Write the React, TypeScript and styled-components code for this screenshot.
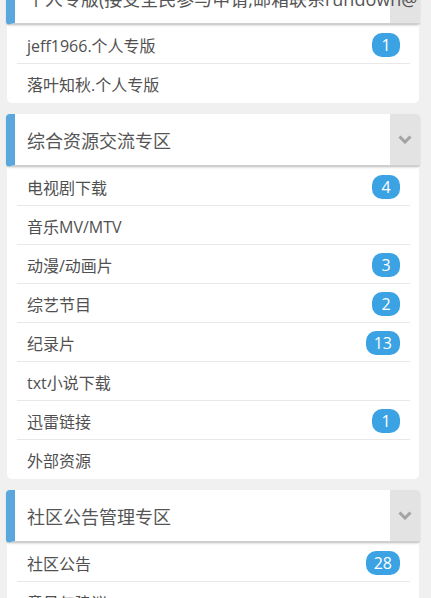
import React from 'react';
import styled, { createGlobalStyle } from 'styled-components';

const GlobalStyle = createGlobalStyle`
    html, body {
        margin: 0;
        padding: 0;
        background: #f0f0f0;
        font-family: "Open Sans", "Noto Sans CJK SC", sans-serif;
    }
`;

const Page = styled.div`
    display: flex;
    flex-direction: column;
    width: 431px;
    height: 598px;
    overflow: hidden;
    box-sizing: border-box;
    padding: 0 11px 0 6px;
`;

const Forums = styled.div`
    display: flex;
    flex-direction: column;
    gap: 11px;
    margin-top: ${(props: { offset: number }) => -props.offset}px;
`;

const Section = styled.section`
    display: flex;
    flex-direction: column;
`;

const Header = styled.div`
    position: relative;
    display: flex;
    align-items: center;
    height: 51px;
    background: #fff;
    border-left: 9px solid #5aa7dd;
    border-bottom: 2px solid #cfcfcf;
    border-radius: 4px;
    box-shadow: 0 1px 2px rgba(0, 0, 0, 0.12);
    overflow: hidden;
`;

const HeaderTitle = styled.div`
    position: relative;
    z-index: 1;
    padding-left: 12px;
    font-size: 18px;
    color: #555;
    white-space: nowrap;
`;

const Toggle = styled.div`
    position: absolute;
    top: 0;
    right: 0;
    bottom: 0;
    width: 30px;
    display: flex;
    align-items: center;
    justify-content: center;
    background: #e3e3e3;
`;

const List = styled.ul`
    list-style: none;
    margin: 0 1px;
    padding: 0 9px 0 10px;
    background: #fff;
    border-radius: 0 0 5px 5px;
`;

const Row = styled.li`
    display: flex;
    align-items: center;
    justify-content: space-between;
    height: 39px;
    box-sizing: border-box;
    padding: 1px 10px 0;
    border-bottom: 1px solid #e8e8e8;
    font-size: 16px;
    color: #505050;

    &:last-child {
        border: none;
    }
`;

const Badge = styled.span`
    min-width: 28px;
    height: 24px;
    box-sizing: border-box;
    padding: 0 8px;
    border-radius: 10px;
    background: #3ba2e4;
    color: #fff;
    font-size: 16px;
    line-height: 24px;
    text-align: center;
`;

interface Forum {
    title: string;
    items: { name: string; count?: number }[];
}

const forums: Forum[] = [
    {
        title: '个人专版(接受全民参与申请,邮箱联系rundown@',
        items: [
            { name: 'jeff1966.个人专版', count: 1 },
            { name: '落叶知秋.个人专版' },
        ],
    },
    {
        title: '综合资源交流专区',
        items: [
            { name: '电视剧下载', count: 4 },
            { name: '音乐MV/MTV' },
            { name: '动漫/动画片', count: 3 },
            { name: '综艺节目', count: 2 },
            { name: '纪录片', count: 13 },
            { name: 'txt小说下载' },
            { name: '迅雷链接', count: 1 },
            { name: '外部资源' },
        ],
    },
    {
        title: '社区公告管理专区',
        items: [
            { name: '社区公告', count: 28 },
            { name: '意见与建议' },
        ],
    },
];

const Chevron = () => (
    <svg width="14" height="9" viewBox="0 0 14 9">
        <path d="M1.5 1.5 L7 7 L12.5 1.5" fill="none" stroke="#a3a3a3" strokeWidth="3" />
    </svg>
);

export default function App() {
    return (
        <Page>
            <GlobalStyle />
            <Forums offset={28}>
                {forums.map(forum => (
                    <Section key={forum.title}>
                        <Header>
                            <Toggle>
                                <Chevron />
                            </Toggle>
                            <HeaderTitle>{forum.title}</HeaderTitle>
                        </Header>
                        <List>
                            {forum.items.map(item => (
                                <Row key={item.name}>
                                    <span>{item.name}</span>
                                    {item.count !== undefined && <Badge>{item.count}</Badge>}
                                </Row>
                            ))}
                        </List>
                    </Section>
                ))}
            </Forums>
        </Page>
    );
}
